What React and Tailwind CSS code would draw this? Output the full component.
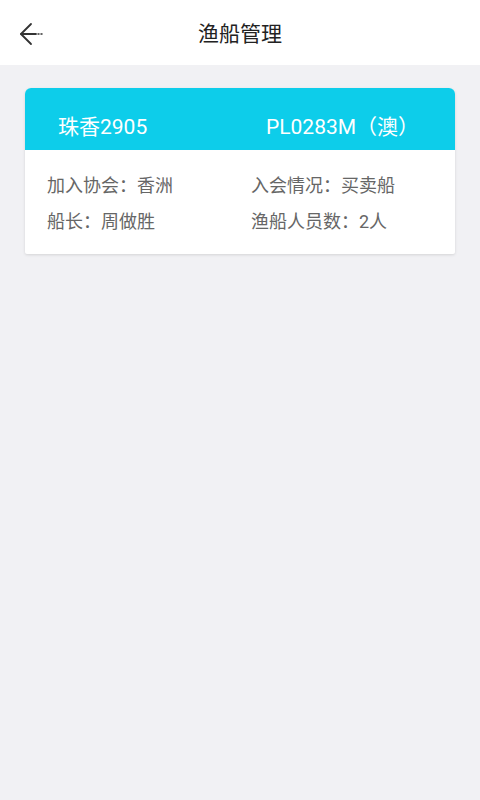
export default function App() {
  const font = { fontFamily: 'Roboto, "Noto Sans CJK SC", "Noto Sans", sans-serif' }

  return (
    <div className="min-h-[800px] w-[480px] bg-[#f1f1f4]" style={font}>
      <header className="relative flex h-[65px] items-center justify-center bg-white pt-[3px]">
        <button className="absolute left-[18px] top-[21px] text-[#333]">
          <svg width="28" height="26" viewBox="0 0 28 26" fill="none" stroke="currentColor" strokeWidth="1.8" strokeLinecap="round" strokeLinejoin="round">
            <path d="M13 3 L3 13 L13 23" />
            <path d="M3 13 H18" />
            <path d="M20 13 H21 M23 13 H24" strokeWidth="1.5" />
          </svg>
        </button>
        <h1 className="text-[21px] leading-none text-[#222]">渔船管理</h1>
      </header>

      <main className="px-[25px] pt-[23px]">
        <div className="overflow-hidden rounded-t-[6px] rounded-b-[2px] bg-white shadow-[0_1px_3px_rgba(0,0,0,0.12)]">
          <div className="grid h-[62px] grid-cols-[208px_1fr] items-center bg-[#0dcdea] pl-[33px] pt-[18px] text-[21px] text-white">
            <span>珠香2905</span>
            <span>PL0283M（澳）</span>
          </div>
          <div className="grid grid-cols-[204px_1fr] gap-y-[12px] px-[22px] pb-[20px] pt-[24px] text-[18px] leading-[24px] text-[#666]">
            <span>加入协会：香洲</span>
            <span>入会情况：买卖船</span>
            <span>船长：周做胜</span>
            <span>渔船人员数：2人</span>
          </div>
        </div>
      </main>
    </div>
  )
}
